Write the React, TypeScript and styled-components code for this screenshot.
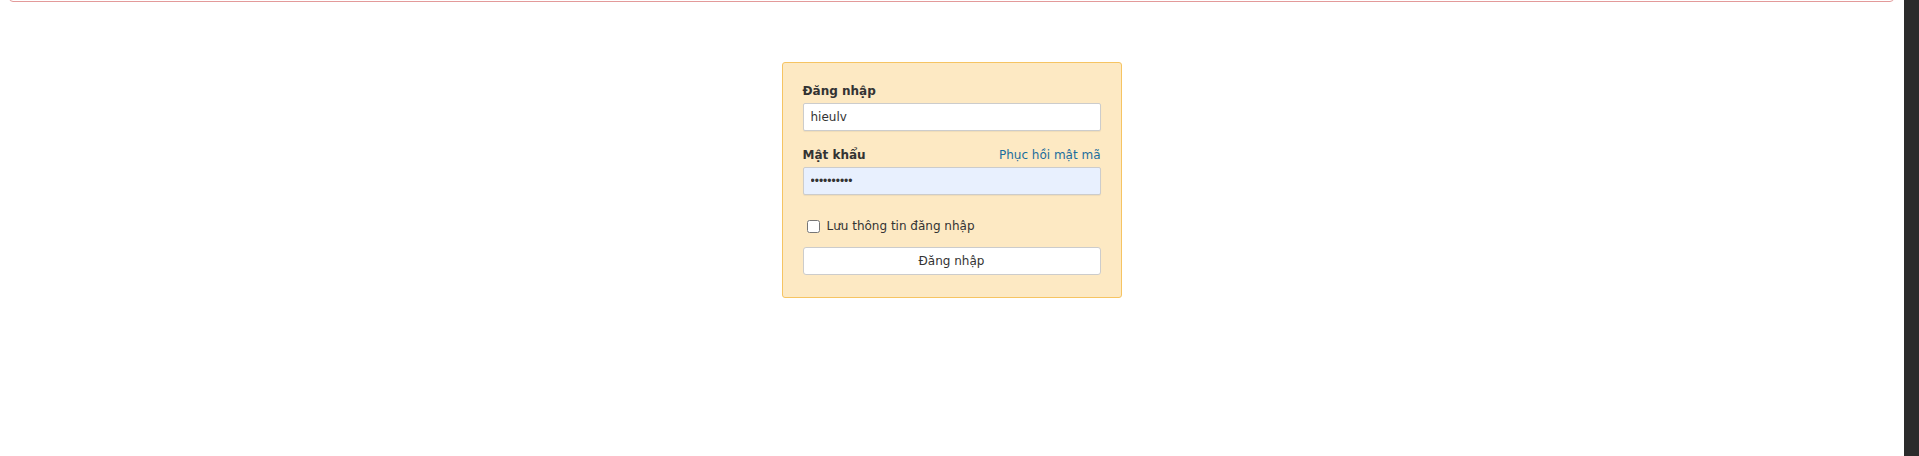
import React from 'react';
import styled, { createGlobalStyle } from 'styled-components';

const GlobalStyle = createGlobalStyle`
  html,
  body {
    margin: 0;
    padding: 0;
    background: #ffffff;
  }
  body {
    font-family: 'DejaVu Sans', Verdana, sans-serif;
    font-size: 12px;
    color: #333333;
  }
`;

const App: React.FC = () => {
  const [user, setUser] = React.useState<string>('hieulv');
  const [password, setPassword] = React.useState<string>('hieulv1234');
  const [remember, setRemember] = React.useState<boolean>(false);

  return (
    <>
      <GlobalStyle />
      <Page>
        <Main>
          <AlertStrip />
          <LoginBox>
            <FieldLabel htmlFor="login-user">Đăng nhập</FieldLabel>
            <TextInput
              id="login-user"
              type="text"
              value={user}
              onChange={e => setUser(e.target.value)}
            />
            <LabelRow>
              <FieldLabel htmlFor="login-pass">Mật khẩu</FieldLabel>
              <RecoverLink href="#">Phục hồi mật mã</RecoverLink>
            </LabelRow>
            <TextInput
              id="login-pass"
              type="password"
              value={password}
              $filled
              onChange={e => setPassword(e.target.value)}
            />
            <RememberRow>
              <Checkbox
                type="checkbox"
                checked={remember}
                onChange={e => setRemember(e.target.checked)}
              />
              <span>Lưu thông tin đăng nhập</span>
            </RememberRow>
            <SubmitButton type="button">Đăng nhập</SubmitButton>
          </LoginBox>
        </Main>
        <ScrollTrack />
      </Page>
    </>
  );
};

const Page = styled.div`
  display: flex;
  height: 100vh;
  overflow: hidden;
`;

const Main = styled.div`
  flex: 1;
  display: flex;
  flex-direction: column;
  padding: 0 10px 0 9px;
`;

const AlertStrip = styled.div`
  margin-top: -40px;
  height: 40px;
  border: 1px solid #e39a9a;
  border-radius: 4px;
  background: #ffffff;
`;

const LoginBox = styled.form`
  box-sizing: border-box;
  width: 340px;
  margin: 60px auto 0;
  padding: 19px 20px 22px;
  display: flex;
  flex-direction: column;
  background: #fde9c3;
  border: 1px solid #f6c462;
  border-radius: 3px;
`;

const FieldLabel = styled.label`
  display: block;
  padding-top: 1px;
  font-weight: bold;
  line-height: 16px;
  color: #333333;
`;

const LabelRow = styled.div`
  display: flex;
  justify-content: space-between;
  align-items: flex-end;
  margin-top: 15px;
`;

const RecoverLink = styled.a`
  line-height: 16px;
  color: #1b6d9d;
  text-decoration: none;
`;

const TextInput = styled.input<{ $filled?: boolean }>`
  box-sizing: border-box;
  width: 100%;
  height: 28px;
  margin-top: 4px;
  padding: 0 7px;
  font-family: ${p =>
    p.type === 'password'
      ? "'Liberation Sans', Arial, sans-serif"
      : "'DejaVu Sans', Verdana, sans-serif"};
  font-size: 12px;
  color: #333333;
  background: ${p => (p.$filled ? '#e8f0fe' : '#ffffff')};
  border: 1px solid #cccccc;
  border-radius: 2px;
  box-shadow: 0 1px 1px rgba(0, 0, 0, 0.06);
  outline: none;
`;

const RememberRow = styled.label`
  display: flex;
  align-items: center;
  gap: 7px;
  margin-top: 23px;
  padding-left: 4px;
  line-height: 16px;
  color: #333333;
`;

const Checkbox = styled.input`
  width: 13px;
  height: 13px;
  margin: 0;
`;

const SubmitButton = styled.button`
  box-sizing: border-box;
  height: 28px;
  margin-top: 13px;
  font-family: 'DejaVu Sans', Verdana, sans-serif;
  font-size: 12px;
  color: #333333;
  background: #ffffff;
  border: 1px solid #cccccc;
  border-radius: 3px;
  cursor: pointer;
`;

const ScrollTrack = styled.div`
  width: 15px;
  flex-shrink: 0;
  background: #2b2b2b;
`;

export default App;
